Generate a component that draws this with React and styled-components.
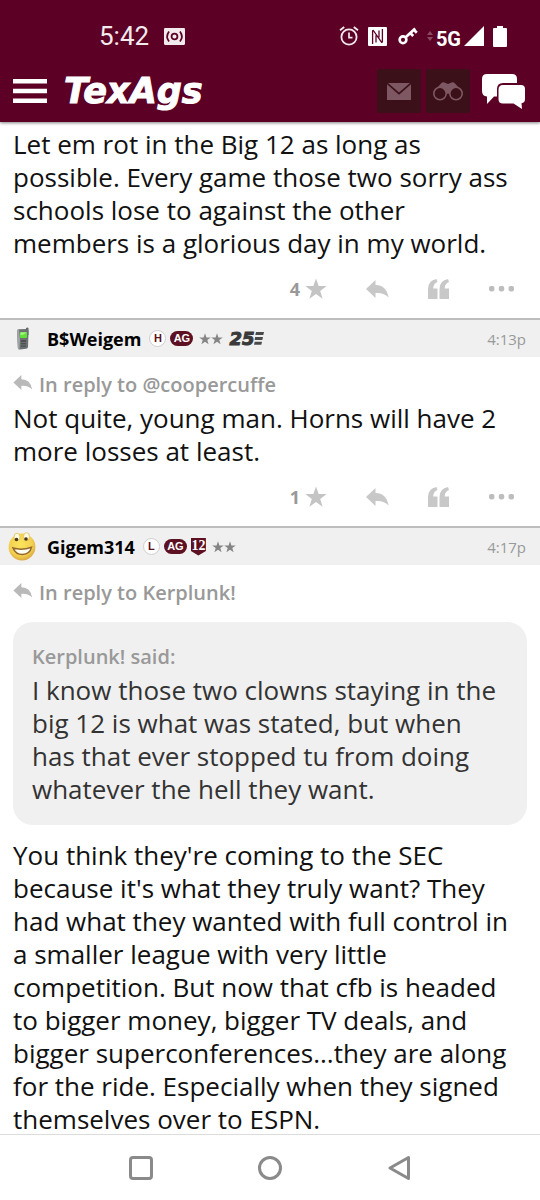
import React from "react";
import styled, { createGlobalStyle } from "styled-components";

const GlobalStyle = createGlobalStyle`
  * {
    box-sizing: border-box;
  }
  body {
    margin: 0;
    background: #ffffff;
    color: #111111;
    font-family: "Open Sans", "Noto Sans", sans-serif;
  }
  button {
    padding: 0;
    border: 0;
    background: none;
    color: inherit;
    font: inherit;
    cursor: pointer;
  }
  svg {
    display: block;
    flex-shrink: 0;
  }
`;

const posts = [
  {
    id: 1,
    stars: 4,
    text: "Let em rot in the Big 12 as long as possible. Every game those two sorry ass schools lose to against the other members is a glorious day in my world.",
  },
  {
    id: 2,
    author: "B$Weigem",
    avatar: "phone",
    letter: "H",
    years: true,
    time: "4:13p",
    replyTo: "@coopercuffe",
    stars: 1,
    text: "Not quite, young man. Horns will have 2 more losses at least.",
  },
  {
    id: 3,
    author: "Gigem314",
    avatar: "smiley",
    letter: "L",
    shield: true,
    time: "4:17p",
    replyTo: "Kerplunk!",
    quote: {
      author: "Kerplunk!",
      text: "I know those two clowns staying in the big 12 is what was stated, but when has that ever stopped tu from doing whatever the hell they want.",
    },
    text: "You think they're coming to the SEC because it's what they truly want? They had what they wanted with full control in a smaller league with very little competition. But now that cfb is headed to bigger money, bigger TV deals, and bigger superconferences...they are along for the ride. Especially when they signed themselves over to ESPN.",
  },
];

/* ---------- icons ---------- */

const CastIcon = () => (
  <svg width="21" height="17" viewBox="0 0 20 16">
    <rect width="20" height="16" rx="1" fill="#f3eaee" />
    <g fill="none" stroke="#5c0025" strokeWidth="1.7">
      <circle cx="10" cy="8" r="2.8" />
      <path d="M4.8 3.2Q1.2 8 4.8 12.8M15.2 3.2Q18.8 8 15.2 12.8" />
    </g>
  </svg>
);

const AlarmIcon = () => (
  <svg width="20" height="20" viewBox="0 0 20 20" fill="none" stroke="#f3eaee">
    <circle cx="10" cy="11" r="7.6" strokeWidth="1.8" />
    <path d="M10 6.5V11.6H13.5" strokeWidth="1.7" />
    <path d="M1 4.3L5.2 1M19 4.3L14.8 1" strokeWidth="1.8" />
  </svg>
);

const NfcIcon = () => (
  <svg width="19" height="19" viewBox="0 0 19 19">
    <rect width="19" height="19" rx="1" fill="#ffffff" />
    <path
      d="M4.6 17V3.2M14.4 2V15.6M8 15.5V8.2M11 3.5V10.5M5 3L14 15.8"
      fill="none"
      stroke="#5c0025"
      strokeWidth="1.3"
    />
  </svg>
);

const KeyIcon = () => (
  <svg width="20" height="18" viewBox="0 0 20 18" fill="none" stroke="#ffffff">
    <circle cx="5" cy="12.8" r="3.4" strokeWidth="2.6" />
    <path d="M7.7 10.3L17.2 1.5M12.3 6L15.2 9M15.8 2.8L18.8 5.8" strokeWidth="2.7" />
  </svg>
);

const DataIcon = () => (
  <svg width="6" height="10" viewBox="0 0 6 10" fill="#8a4a62">
    <path d="M0 4L3 0L6 4ZM0 6H6L3 10Z" />
  </svg>
);

const SignalIcon = () => (
  <svg width="20" height="20" viewBox="0 0 20 20" fill="#ffffff">
    <path d="M20 0V20H0Z" />
  </svg>
);

const BatteryIcon = () => (
  <svg width="14" height="21" viewBox="0 0 14 21" fill="#ffffff">
    <path d="M4 0H10V2H13Q14 2 14 3V20Q14 21 13 21H1Q0 21 0 20V3Q0 2 1 2H4Z" />
  </svg>
);

const MenuIcon = () => (
  <svg width="34" height="24" viewBox="0 0 34 24" fill="#ffffff">
    <path d="M0 0H34V4.5H0ZM0 9.8H34V14.3H0ZM0 19.5H34V24H0Z" />
  </svg>
);

const MailIcon = () => (
  <svg width="24" height="17" viewBox="0 0 24 17" fill="#7d5761">
    <path d="M1 0H23L12 9.5Z" />
    <path d="M0 1.2L12 11.8L24 1.2V17H0Z" />
  </svg>
);

const BinocularsIcon = () => (
  <svg width="30" height="19" viewBox="0 0 30 19">
    <path
      d="M3 7L8 1.5Q10 -0.5 12.5 1L15 2L17.5 1Q20 -0.5 22 1.5L27 7L22 9L15 12L8 9Z"
      fill="#7d5761"
    />
    <g fill="#3b1019" stroke="#7d5761" strokeWidth="1.6">
      <circle cx="7" cy="11.5" r="6.2" />
      <circle cx="23" cy="11.5" r="6.2" />
    </g>
  </svg>
);

const ChatIcon = () => (
  <svg width="43" height="35" viewBox="0 0 43 35" fill="#ffffff">
    <path d="M5 0H30Q35 0 35 5V9H21Q15 9 15 15V22.5H12L5 30V22.5Q0 22 0 17V5Q0 0 5 0Z" />
    <path d="M21 11H39Q43 11 43 15V25Q43 28.8 39.5 29.2L40 35L31.5 29.5H21Q16.5 29.5 16.5 25V15.5Q16.5 11 21 11Z" />
  </svg>
);

const StarIcon = ({ size, color }) => (
  <svg width={size} height={size} viewBox="0 0 22 22" fill={color}>
    <path d="M11 0.5L13.6 8.1H21.6L15.2 12.9L17.6 20.7L11 16L4.4 20.7L6.8 12.9L0.4 8.1H8.4Z" />
  </svg>
);

const ReplyIcon = ({ width, height, color }) => (
  <svg width={width} height={height} viewBox="0 0 23 18" fill={color}>
    <path d="M0 9L9.5 0V5Q20.5 5 22.5 17.5Q18 12.3 9.5 13V18Z" />
  </svg>
);

const QuoteIcon = () => (
  <svg width="22" height="20" viewBox="0 0 22 20" fill="#c8c8c8">
    <path d="M0 20V10Q0 1.5 8.5 0L9.5 3Q5.2 4.6 5.2 9.5H9.5V20Z" />
    <path d="M11.5 20V10Q11.5 1.5 20 0L21 3Q16.7 4.6 16.7 9.5H21V20Z" />
  </svg>
);

const DotsIcon = () => (
  <svg width="25" height="6" viewBox="0 0 25 6" fill="#bdbdbd">
    <rect width="5.4" height="5.4" rx="1.8" />
    <rect x="9.8" width="5.4" height="5.4" rx="1.8" />
    <rect x="19.6" width="5.4" height="5.4" rx="1.8" />
  </svg>
);

const PhoneAvatar = () => (
  <svg width="28" height="24" viewBox="0 0 28 24">
    <path d="M18 1Q19.5 0 20.5 1V8H18Z" fill="#65686a" />
    <path d="M9 4Q9 2.5 11 2.3L18.5 2Q20.5 2 20.5 4L20 20Q19.9 21.5 18 21.8L12 22.5Q10 22.6 9.9 21Z" fill="#6c7072" />
    <path d="M9 4Q9 2.5 11 2.3L12 12L11.5 22.4Q10 22.3 9.9 21Z" fill="#a2a5a6" />
    <rect x="12" y="5" width="7" height="6" rx="1" fill="#62e03a" />
    <path d="M12.5 8Q16 8 18.5 5.5H12.5Z" fill="#a6f683" />
    <g fill="#4c5052">
      <rect x="13" y="13" width="5" height="2" />
      <rect x="13" y="16" width="5" height="1.3" />
      <rect x="13" y="18.5" width="5" height="1.3" />
    </g>
  </svg>
);

const SmileyAvatar = () => (
  <svg width="28" height="29" viewBox="0 0 28 29">
    <defs>
      <radialGradient id="face" cx="0.45" cy="0.4" r="0.62">
        <stop offset="0" stopColor="#fbe45c" />
        <stop offset="0.7" stopColor="#f3cf50" />
        <stop offset="1" stopColor="#d9a640" />
      </radialGradient>
    </defs>
    <circle cx="14" cy="15" r="13.4" fill="url(#face)" />
    <ellipse cx="9" cy="5" rx="3" ry="3.8" fill="#fffbe6" stroke="#e0c04c" strokeWidth="0.8" />
    <ellipse cx="18.5" cy="4.5" rx="3" ry="3.8" fill="#fffbe6" stroke="#e0c04c" strokeWidth="0.8" />
    <circle cx="8.5" cy="7.5" r="1.8" fill="#4a371f" />
    <circle cx="18" cy="7" r="1.8" fill="#4a371f" />
    <path
      d="M5 16Q14 18.6 23.5 15.2Q22 22 14.5 22.6Q7.5 22.5 5 16Z"
      fill="#fffdf2"
      stroke="#94692c"
      strokeWidth="1.5"
    />
  </svg>
);

const SpeedLines = () => (
  <svg width="10" height="13" viewBox="0 0 10 13" fill="#4a4a4a">
    <path d="M2 0H10L9.3 3H1.3ZM1.1 4.9H9L8.3 7.9H0.6ZM0.7 9.8H8L7.3 12.8H0Z" />
  </svg>
);

/* ---------- components ---------- */

const StatusBar = () => (
  <Status>
    <StatusGroup $gap={15}>
      <Clock>5:42</Clock>
      <CastIcon />
    </StatusGroup>
    <StatusGroup $gap={9}>
      <AlarmIcon />
      <NfcIcon />
      <KeyWrap>
        <KeyIcon />
      </KeyWrap>
      <Network>
        <DataIcon />
        <NetworkName>5G</NetworkName>
        <SignalIcon />
      </Network>
      <BatteryIcon />
    </StatusGroup>
  </Status>
);

const AppBar = () => (
  <Bar>
    <button type="button" aria-label="Menu">
      <MenuIcon />
    </button>
    <Logo href="#home">TexAgs</Logo>
    <BarActions>
      <SquareButton type="button" aria-label="Messages">
        <MailIcon />
      </SquareButton>
      <SquareButton type="button" aria-label="Watched topics">
        <BinocularsIcon />
      </SquareButton>
      <ChatButton type="button" aria-label="Forums">
        <ChatIcon />
      </ChatButton>
    </BarActions>
  </Bar>
);

const PostHeader = ({ post }) => (
  <Heading>
    <Avatar>
      {post.avatar === "phone" ? <PhoneAvatar /> : <SmileyAvatar />}
    </Avatar>
    <Author href="#user">{post.author}</Author>
    <Badges>
      <LetterBadge>{post.letter}</LetterBadge>
      <AgBadge>AG</AgBadge>
      {post.shield && <Shield>12</Shield>}
      <Rank>
        <StarIcon size={12} color="#858585" />
        <StarIcon size={12} color="#858585" />
      </Rank>
      {post.years && (
        <Years>
          25
          <SpeedLines />
        </Years>
      )}
    </Badges>
    <Time>{post.time}</Time>
  </Heading>
);

const PostActions = ({ stars }) => (
  <Actions>
    <StarButton type="button" aria-label={`${stars} stars`}>
      {stars}
      <StarIcon size={22} color="#c4c4c4" />
    </StarButton>
    <button type="button" aria-label="Reply">
      <ReplyIcon width={23} height={18} color="#c8c8c8" />
    </button>
    <button type="button" aria-label="Quote">
      <QuoteIcon />
    </button>
    <button type="button" aria-label="More">
      <DotsIcon />
    </button>
  </Actions>
);

const Post = ({ post }) => (
  <article>
    {post.author && <PostHeader post={post} />}
    <Content $first={!post.author}>
      {post.replyTo && (
        <ReplyLink href="#parent">
          <ReplyIcon width={20} height={15} color="#b9b9b9" />
          In reply to {post.replyTo}
        </ReplyLink>
      )}
      {post.quote && (
        <Quote>
          <QuoteAuthor>{post.quote.author} said:</QuoteAuthor>
          <Text>{post.quote.text}</Text>
        </Quote>
      )}
      <Text>{post.text}</Text>
    </Content>
    {post.stars && <PostActions stars={post.stars} />}
  </article>
);

const App = () => {
  return (
    <Screen>
      <GlobalStyle />
      <Top>
        <StatusBar />
        <AppBar />
      </Top>
      <Thread>
        {posts.map((post) => (
          <Post key={post.id} post={post} />
        ))}
      </Thread>
      <SystemNav>
        <button type="button" aria-label="Recent apps">
          <svg width="26" height="26" viewBox="0 0 26 26" fill="none" stroke="#8a8a8a" strokeWidth="3">
            <rect x="2.5" y="2.5" width="21" height="21" rx="2.5" />
          </svg>
        </button>
        <button type="button" aria-label="Home">
          <svg width="26" height="26" viewBox="0 0 26 26" fill="none" stroke="#8a8a8a" strokeWidth="3">
            <circle cx="13" cy="13" r="10.5" />
          </svg>
        </button>
        <button type="button" aria-label="Back">
          <svg width="26" height="26" viewBox="0 0 26 26" fill="none" stroke="#8a8a8a" strokeWidth="3" strokeLinejoin="round">
            <path d="M22.5 2.5V23.5L4 13Z" />
          </svg>
        </button>
      </SystemNav>
    </Screen>
  );
};

export default App;

/* ---------- styles ---------- */

const Screen = styled.div`
  display: flex;
  flex-direction: column;
  height: 100vh;
`;

const Top = styled.header`
  position: relative;
  z-index: 1;
  background: #5c0025;
  box-shadow: 0 1px 3px rgba(0, 0, 0, 0.5);
`;

const Status = styled.div`
  display: flex;
  justify-content: space-between;
  align-items: center;
  height: 62px;
  padding: 10px 33px 0 99px;
  color: #ffffff;
  font-family: Roboto, sans-serif;
`;

const StatusGroup = styled.div`
  display: flex;
  align-items: center;
  gap: ${({ $gap }) => $gap}px;
`;

const Clock = styled.time`
  font-size: 26px;
  line-height: 28px;
  color: #f3eaee;
`;

const KeyWrap = styled.span`
  padding-left: 2px;
`;

const Network = styled.span`
  display: flex;
  align-items: center;
  gap: 3px;
`;

const NetworkName = styled.span`
  padding-top: 5px;
  font-size: 20px;
  line-height: 20px;
  font-weight: 700;
`;

const Bar = styled.div`
  display: flex;
  align-items: center;
  height: 60px;
  padding: 0 15px 2px 13px;
`;

const Logo = styled.a`
  margin-left: 17px;
  color: #ffffff;
  font-family: "DejaVu Sans", sans-serif;
  font-size: 35px;
  line-height: 40px;
  font-weight: 700;
  font-style: italic;
  text-decoration: none;
  -webkit-text-stroke: 1px #ffffff;
`;

const BarActions = styled.div`
  display: flex;
  align-items: center;
  gap: 5px;
  margin-left: auto;
`;

const SquareButton = styled.button`
  display: flex;
  align-items: center;
  justify-content: center;
  width: 44px;
  height: 44px;
  border-radius: 2px;
  background: #3b1019;
`;

const ChatButton = styled.button`
  margin-left: 7px;
`;

const Thread = styled.main`
  flex: 1;
  min-height: 0;
  overflow-y: auto;
  scrollbar-width: none;
`;

const Heading = styled.header`
  display: flex;
  align-items: center;
  height: 39px;
  padding: 0 14px 0 8px;
  border-top: 2px solid #bdbdbd;
  background: #f0f0f0;
`;

const Avatar = styled.span`
  margin-right: 11px;
`;

const Author = styled.a`
  color: #000000;
  font-size: 18px;
  line-height: 28px;
  font-weight: 700;
  text-decoration: none;
`;

const Badges = styled.div`
  display: flex;
  align-items: center;
  gap: 4px;
  margin-left: 8px;
  font-family: "Liberation Sans", Arial, sans-serif;
`;

const LetterBadge = styled.span`
  width: 17px;
  height: 17px;
  border: 1px solid #cfcfcf;
  border-radius: 50%;
  background: #ffffff;
  color: #5c1022;
  font-size: 11px;
  line-height: 15px;
  font-weight: 700;
  text-align: center;
`;

const AgBadge = styled.span`
  width: 23px;
  height: 15px;
  border-radius: 8px;
  background: #5c1022;
  color: #ffffff;
  font-size: 11px;
  line-height: 15px;
  font-weight: 700;
  text-align: center;
`;

const Shield = styled.span`
  width: 15px;
  height: 18px;
  background: #5c1022;
  clip-path: polygon(0 0, 100% 0, 100% 75%, 50% 100%, 0 75%);
  color: #ffffff;
  font-family: "Liberation Serif", serif;
  font-size: 14px;
  line-height: 15px;
  font-weight: 700;
  text-align: center;
`;

const Rank = styled.span`
  display: flex;
  margin-left: 2px;
`;

const Years = styled.span`
  display: flex;
  align-items: center;
  margin-left: 2px;
  color: #3a3a3a;
  font-family: "DejaVu Sans", sans-serif;
  font-size: 18px;
  line-height: 20px;
  font-weight: 700;
  font-style: italic;
  -webkit-text-stroke: 1px #3a3a3a;
`;

const Time = styled.time`
  margin-left: auto;
  color: #999999;
  font-size: 15px;
  line-height: 28px;
`;

const Content = styled.div`
  padding: ${({ $first }) => ($first ? 6 : 14)}px 13px 0;
`;

const ReplyLink = styled.a`
  display: flex;
  gap: 6px;
  margin-bottom: 3px;
  color: #999999;
  font-size: 20px;
  line-height: 28px;
  font-weight: 600;
  text-decoration: none;
  svg {
    margin-top: 4px;
  }
`;

const Text = styled.p`
  margin: 0;
  font-size: 26px;
  line-height: 33px;
`;

const Quote = styled.blockquote`
  margin: 15px 0 14px;
  padding: 21px 19px 19px;
  border-radius: 20px;
  background: #f0f0f0;
  color: #333333;
`;

const QuoteAuthor = styled.p`
  margin: 0 0 3px;
  color: #999999;
  font-size: 20px;
  line-height: 28px;
  font-weight: 600;
`;

const Actions = styled.footer`
  display: flex;
  justify-content: flex-end;
  align-items: center;
  gap: 39px;
  height: 58px;
  padding-right: 26px;
`;

const StarButton = styled.button`
  display: flex;
  align-items: center;
  gap: 5px;
  color: #999999;
  font-size: 18px;
  line-height: 22px;
  font-weight: 700;
`;

const SystemNav = styled.nav`
  display: flex;
  justify-content: center;
  align-items: center;
  gap: 103px;
  height: 66px;
  border-top: 1px solid #dcdcdc;
  background: #ffffff;
`;
